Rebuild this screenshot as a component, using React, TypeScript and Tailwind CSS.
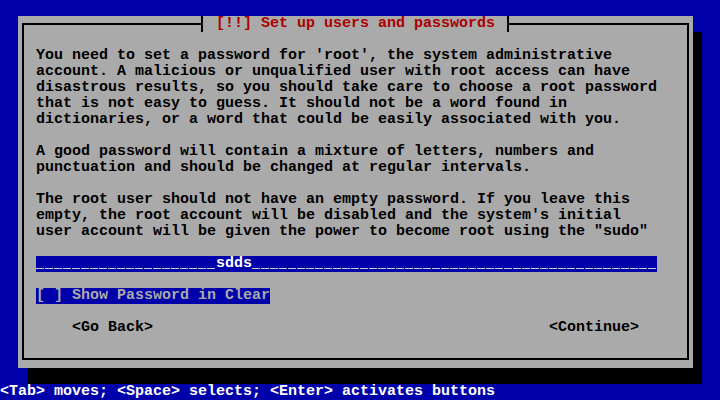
const FIELD = '____________________sdds_____________________________________________'

function PasswordField() {
  return (
    <div className="h-4 w-[621px] bg-[#0000aa] flex">
      {FIELD.split('').map((c, i) =>
        c === '_' ? (
          <span key={i} className="w-[9px] h-4 flex-none pt-[12px]">
            <span className="block w-[8px] h-px bg-[#c8c8c8]" />
          </span>
        ) : (
          <span key={i} className="w-[9px] h-4 flex-none text-white">
            {c}
          </span>
        )
      )}
    </div>
  )
}

export default function App() {
  const para1 = [
    "You need to set a password for 'root', the system administrative",
    'account. A malicious or unqualified user with root access can have',
    'disastrous results, so you should take care to choose a root password',
    'that is not easy to guess. It should not be a word found in',
    'dictionaries, or a word that could be easily associated with you.',
  ]
  const para2 = [
    'A good password will contain a mixture of letters, numbers and',
    'punctuation and should be changed at regular intervals.',
  ]
  const para3 = [
    'The root user should not have an empty password. If you leave this',
    "empty, the root account will be disabled and the system's initial",
    'user account will be given the power to become root using the "sudo"',
  ]

  return (
    <div className="w-[720px] h-[400px] bg-[#0000aa] flex flex-col font-['Liberation_Mono',monospace] text-[15px] leading-4 font-bold overflow-hidden">
      <div className="h-4" />
      <div className="relative ml-[18px] w-[675px] h-[352px] bg-[#aaaaaa] shadow-[9px_16px_0_#000] pt-[7px] px-[4px] pb-[8px]">
        <div className="h-full border-2 border-black pl-[12px] pr-[12px] pt-[23px] text-black">
          {para1.map((l) => (
            <div key={l} className="h-4 whitespace-pre">{l}</div>
          ))}
          <div className="h-4" />
          {para2.map((l) => (
            <div key={l} className="h-4 whitespace-pre">{l}</div>
          ))}
          <div className="h-4" />
          {para3.map((l) => (
            <div key={l} className="h-4 whitespace-pre">{l}</div>
          ))}
          <div className="h-4" />
          <PasswordField />
          <div className="h-4" />
          <div className="h-4 flex">
            <span className="bg-[#0000aa] text-[#aaaaaa] whitespace-pre">
              [<span className="inline-block w-[9px]" />] Show Password in Clear
            </span>
          </div>
          <div className="h-4" />
          <div className="h-4 flex justify-between whitespace-pre">
            <span className="ml-[36px]">&lt;Go Back&gt;</span>
            <span className="mr-[36px]">&lt;Continue&gt;</span>
          </div>
        </div>
        <div className="absolute left-[183px] top-0 h-4 w-[308px] bg-[#aaaaaa] border-x-2 border-black pl-[13px] text-[#aa0000] whitespace-pre">
          [!!] Set up users and passwords
        </div>
      </div>
      <div className="h-4" />
      <div className="h-4 text-white whitespace-pre">
        &lt;Tab&gt; moves; &lt;Space&gt; selects; &lt;Enter&gt; activates buttons
      </div>
    </div>
  )
}
